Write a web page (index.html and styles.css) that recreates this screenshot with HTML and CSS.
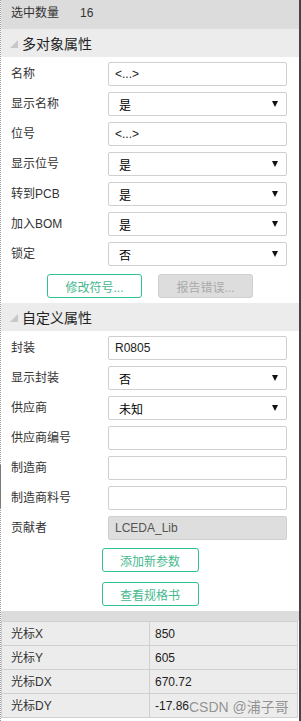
FILE: index.html
```html
<!DOCTYPE html>
<html lang="zh">
<head>
  <meta charset="UTF-8" />
  <title>属性</title>
  <link rel="stylesheet" href="styles.css">
</head>
<body>
  <div class="panel">
    <div class="content">
      <div class="edge-mark"></div>

      <!-- 选中数量 -->
      <div class="count-bar">
        <span class="count-label">选中数量</span>
        <span>16</span>
      </div>

      <!-- 多对象属性 -->
      <div class="section-title"><span class="tri"></span>多对象属性</div>
      <div class="fields">
        <div class="lbl">名称</div>
        <div class="field">&lt;...&gt;</div>
        <div class="lbl">显示名称</div>
        <div class="field select"><span>是</span><i class="arrow"></i></div>
        <div class="lbl">位号</div>
        <div class="field">&lt;...&gt;</div>
        <div class="lbl">显示位号</div>
        <div class="field select"><span>是</span><i class="arrow"></i></div>
        <div class="lbl">转到PCB</div>
        <div class="field select"><span>是</span><i class="arrow"></i></div>
        <div class="lbl">加入BOM</div>
        <div class="field select"><span>是</span><i class="arrow"></i></div>
        <div class="lbl">锁定</div>
        <div class="field select"><span>否</span><i class="arrow"></i></div>
      </div>
      <div class="btn-row">
        <button class="btn">修改符号...</button>
        <button class="btn disabled">报告错误...</button>
      </div>

      <!-- 自定义属性 -->
      <div class="section-title second"><span class="tri"></span>自定义属性</div>
      <div class="fields">
        <div class="lbl">封装</div>
        <div class="field">R0805</div>
        <div class="lbl">显示封装</div>
        <div class="field select"><span>否</span><i class="arrow"></i></div>
        <div class="lbl">供应商</div>
        <div class="field select"><span>未知</span><i class="arrow"></i></div>
        <div class="lbl">供应商编号</div>
        <div class="field"></div>
        <div class="lbl">制造商</div>
        <div class="field"></div>
        <div class="lbl">制造商料号</div>
        <div class="field"></div>
        <div class="lbl">贡献者</div>
        <div class="field readonly">LCEDA_Lib</div>
      </div>
      <div class="btn-col">
        <button class="btn wide">添加新参数</button>
        <button class="btn wide">查看规格书</button>
      </div>

      <!-- 光标坐标 -->
      <div class="gap-band"></div>
      <div class="cursor-table">
        <div class="cell">光标X</div><div class="cell val">850</div>
        <div class="cell">光标Y</div><div class="cell val">605</div>
        <div class="cell">光标DX</div><div class="cell val">670.72</div>
        <div class="cell">光标DY</div><div class="cell val">-17.86</div>
        <div class="watermark">CSDN @浦子哥</div>
      </div>
    </div>
    <div class="scrollbar"></div>
  </div>
</body>
</html>
```

FILE: styles.css
```css
* { margin: 0; padding: 0; box-sizing: border-box; }

body {
  width: 301px;
  height: 721px;
  overflow: hidden;
  background: #dcdcdc;
  font-family: "Liberation Sans", "Noto Sans CJK SC", sans-serif;
  font-size: 12px;
  color: #333;
}

.panel {
  display: flex;
  height: 721px;
}

.content {
  position: relative;
  width: 299px;
  border-left: 1px dotted #9a9a9a;
  background: #fff;
  display: flex;
  flex-direction: column;
}

/* 左边那一小段深色条 */
.edge-mark {
  position: absolute;
  left: -1px;
  top: 465px;
  width: 1px;
  height: 43px;
  background: #7a7a7a;
}

.scrollbar {
  width: 2px;
  background: #444;
}

/* 顶部 选中数量 */
.count-bar {
  height: 29px;
  background: #dcdcdc;
  display: flex;
  padding: 6px 0 0 10px;
  line-height: 14px;
  color: #333;
}
.count-label { width: 69px; }

/* 分组标题 */
.section-title {
  height: 28px;
  background: #ececec;
  display: flex;
  align-items: center;
  padding-left: 9px;
  font-size: 14px;
  color: #222;
}
.section-title.second { margin-top: 5px; }
.tri {
  width: 0;
  height: 0;
  border-left: 8px solid transparent;
  border-bottom: 8px solid #c8c8c8;
  margin-right: 4px;
  margin-top: 2px;
}

/* 表单行 */
.fields {
  display: grid;
  grid-template-columns: 97px 179px;
  row-gap: 6px;
  align-items: center;
  padding: 5px 0 0 10px;
}
.lbl {
  line-height: 16px;
  color: #333;
}
.field {
  height: 24px;
  border: 1px solid #cfcfcf;
  border-radius: 2px;
  padding-left: 6px;
  display: flex;
  align-items: center;
  color: #222;
}
.field.select {
  padding-left: 10px;
  padding-right: 8px;
  color: #000;
}
.arrow {
  margin-left: auto;
  width: 0;
  height: 0;
  border-left: 3px solid transparent;
  border-right: 3px solid transparent;
  border-top: 6px solid #111;
}
.field.readonly {
  background: #dedede;
  color: #555;
}

/* 按钮 */
.btn-row {
  display: flex;
  justify-content: center;
  gap: 16px;
  margin-top: 8px;
}
.btn-col {
  display: flex;
  flex-direction: column;
  align-items: center;
  gap: 10px;
  margin-top: 8px;
}
.btn {
  width: 95px;
  height: 24px;
  background: #fff;
  border: 1px solid #2cc294;
  border-radius: 3px;
  color: #45b98d;
  font-family: inherit;
  font-size: 12px;
}
.btn.wide { width: 97px; }
.btn.disabled {
  background: #dddddd;
  border-color: #cfcfcf;
  color: #aaa;
}

/* 底部 光标坐标表 */
.gap-band {
  height: 10px;
  margin-top: 5px;
  background: #dcdcdc;
}
.cursor-table {
  position: relative;
  display: grid;
  grid-template-columns: 147px 1fr;
  background: #ececec;
  border-left: 1px solid #d0d0d0;
  border-right: 1px solid #d0d0d0;
  border-bottom: 1px solid #d0d0d0;
  margin-right: 1px;
}
.cell {
  height: 24px;
  border-top: 1px solid #d0d0d0;
  padding: 4px 0 0 9px;
  line-height: 16px;
  color: #333;
}
.cell.val {
  border-left: 1px solid #d0d0d0;
  padding-left: 5px;
  color: #222;
}
.watermark {
  position: absolute;
  left: 187px;
  top: 78px;
  font-size: 14px;
  color: rgba(130, 130, 130, 0.85);
  line-height: 16px;
}
```
